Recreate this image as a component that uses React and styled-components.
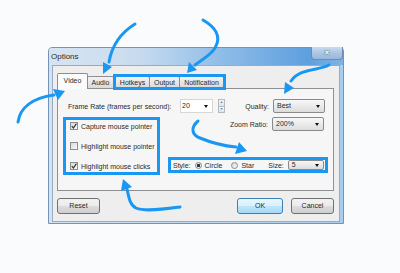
import React from "react";
import styled, { createGlobalStyle } from "styled-components";

const ink = "#1a97f2";

const GlobalStyle = createGlobalStyle`
  html, body {
    margin: 0;
    padding: 0;
    background: #fafbfd;
  }
  body {
    font-family: "Liberation Sans", Arial, sans-serif;
    color: #2a2a2a;
  }
`;

const Tick = () => (
  <svg width="6" height="6" viewBox="0 0 6 6">
    <polyline points="0.8,3 2.4,5 5.4,0.6" fill="none" stroke="#2b2b2b" strokeWidth="1.1" />
  </svg>
);

export default function App() {
  return (
    <>
      <GlobalStyle />
      <Page>
        <Window>
          <TitleBar>
            <Title>Options</Title>
            <CloseButton>✕</CloseButton>
          </TitleBar>
          <Client>
            <TabStrip>
              <Tab $active $w={31}>Video</Tab>
              <Tab $w={27}>Audio</Tab>
              <TabGroup>
                <Tab $w={35}>Hotkeys</Tab>
                <Tab $w={31}>Output</Tab>
                <Tab $w={45}>Notification</Tab>
              </TabGroup>
            </TabStrip>
            <Panel>
              <TopRow>
                <FrameLabel>Frame Rate (frames per second):</FrameLabel>
                <Combo>
                  20
                  <Caret />
                </Combo>
                <Spinner>
                  <SpinButton>▲</SpinButton>
                  <SpinButton>▼</SpinButton>
                </Spinner>
                <FieldLabel>Quality:</FieldLabel>
                <Select $w={52} $end={8}>
                  Best
                  <Caret />
                </Select>
              </TopRow>
              <Body>
                <CheckGroup>
                  <CheckRow>
                    <CheckBox>
                      <Tick />
                    </CheckBox>
                    Capture mouse pointer
                  </CheckRow>
                  <CheckRow>
                    <CheckBox />
                    Highlight mouse pointer
                  </CheckRow>
                  <CheckRow>
                    <CheckBox>
                      <Tick />
                    </CheckBox>
                    Highlight mouse clicks
                  </CheckRow>
                </CheckGroup>
                <RightColumn>
                  <ZoomRow>
                    <FieldLabel>Zoom Ratio:</FieldLabel>
                    <Select $w={52} $end={4}>
                      200%
                      <Caret />
                    </Select>
                  </ZoomRow>
                  <StyleGroup>
                    <Inline $space={2}>Style:</Inline>
                    <Radio $checked $space={4} />
                    <Inline $space={3}>Circle</Inline>
                    <Radio $space={9} />
                    <Inline $space={3}>Star</Inline>
                    <Inline $space={14}>Size:</Inline>
                    <Select $w={36} $space={4} $small>
                      5
                      <Caret />
                    </Select>
                  </StyleGroup>
                </RightColumn>
              </Body>
            </Panel>
            <ButtonRow>
              <Button $w={43}>Reset</Button>
              <Button $w={46} $primary>
                OK
              </Button>
              <Button $w={43}>Cancel</Button>
            </ButtonRow>
          </Client>
        </Window>

        <Marks viewBox="0 0 400 273">
          <g fill="none" stroke={ink} strokeWidth="3" strokeLinecap="round">
            <path d="M135 24 C122 32 112 45 109 62" />
            <path d="M203 20 C215 27 222 36 215 48 C210 56 201 60 195 65" />
            <path d="M18 122 C20 108 32 98 54 95" />
            <path d="M329 65 C318 71 300 68 291 81" />
            <path d="M198 121 C190 128 192 135 200 138 C212 143 225 146 236 147" />
            <path d="M180 207 C165 209 145 212 136 208 C130 205 129 198 127 189" />
          </g>
          <g fill={ink}>
            <polygon points="103,74 112,67 103,62" />
            <polygon points="187,73 197,70 189,62" />
            <polygon points="65,91 58,100 53,89" />
            <polygon points="284,94 294,88 285,82" />
            <polygon points="247,151 235,154 239,142" />
            <polygon points="123,179 132,187 121,191" />
          </g>
        </Marks>
      </Page>
    </>
  );
}

const Page = styled.div`
  position: relative;
  width: 400px;
  height: 273px;
  box-sizing: border-box;
  padding: 47px 0 0 48px;
  overflow: hidden;
  background: #fafbfd;
`;

const Window = styled.div`
  width: 296px;
  height: 177px;
  box-sizing: border-box;
  border: 1px solid #7393b8;
  border-radius: 4px 4px 0 0;
  background: linear-gradient(90deg, #d3e3f2 0%, #bfd6ee 50%, #a9cdef 100%);
  display: flex;
  flex-direction: column;
  padding: 0 3px 1px 3px;
`;

const TitleBar = styled.div`
  height: 17px;
  margin: 0 -3px;
  padding-left: 2px;
  display: flex;
  justify-content: space-between;
  align-items: flex-start;
  background: linear-gradient(90deg, #d6e4f2 0%, #c9dcef 30%, #8dbbe8 60%, #5f9fde 88%, #7fb3e5 100%);
  border-radius: 3px 3px 0 0;
`;

const Title = styled.span`
  font-size: 8px;
  line-height: 17px;
  color: #2a2a2a;
`;

const CloseButton = styled.div`
  width: 32px;
  height: 13px;
  margin-top: -1px;
  box-sizing: border-box;
  border: 1px solid #6f8bb0;
  border-top: none;
  border-radius: 0 0 4px 4px;
  background: linear-gradient(180deg, #c9dbee 0%, #a9c4e2 55%, #98b8dc 100%);
  color: #fff;
  font-size: 7px;
  font-weight: bold;
  line-height: 12px;
  text-align: center;
  text-shadow: 0 0 1px #3a4a60, 0 0 1px #3a4a60;
`;

const Client = styled.div`
  flex: 1;
  box-sizing: border-box;
  border: 1px solid #9aabbd;
  background: #eeeeee;
  padding: 7px 5px 7px 4px;
  display: flex;
  flex-direction: column;
`;

const TabStrip = styled.div`
  height: 15px;
  display: flex;
  align-items: flex-end;
  position: relative;
  z-index: 1;
`;

const TabGroup = styled.div`
  display: flex;
  margin-left: 1px;
  outline: 3px solid ${ink};
  outline-offset: -1px;
`;

const Tab = styled.div`
  width: ${(p) => p.$w}px;
  height: ${(p) => (p.$active ? 16 : 12)}px;
  margin-bottom: ${(p) => (p.$active ? -1 : 0)}px;
  box-sizing: border-box;
  border: 1px solid #8c8e94;
  border-bottom: none;
  border-radius: 2px 2px 0 0;
  background: ${(p) =>
    p.$active ? "#fbfbfb" : "linear-gradient(180deg, #f3f3f3 0%, #e6e6e6 50%, #d9d9d9 100%)"};
  font-size: 7px;
  line-height: ${(p) => (p.$active ? 14 : 11)}px;
  text-align: center;
  color: #2a2a2a;

  & + & {
    margin-left: -1px;
  }
`;

const Panel = styled.div`
  width: 277px;
  height: 103px;
  box-sizing: border-box;
  border: 1px solid #8e9096;
  background: #f6f6f6;
  padding: 10px 0 0 5px;
`;

const TopRow = styled.div`
  height: 14px;
  display: flex;
  align-items: center;
`;

const FrameLabel = styled.span`
  width: 112px;
  margin-left: 5px;
  font-size: 7px;
  white-space: nowrap;
`;

const Caret = styled.span`
  position: absolute;
  right: 4px;
  top: 50%;
  margin-top: -1px;
  width: 0;
  height: 0;
  border-left: 2.5px solid transparent;
  border-right: 2.5px solid transparent;
  border-top: 3px solid #111;
`;

const Combo = styled.div`
  position: relative;
  width: 33px;
  height: 14px;
  box-sizing: border-box;
  border: 1px solid #d6d6d6;
  background: #fff;
  padding-left: 1px;
  font-size: 7px;
  line-height: 12px;
`;

const Spinner = styled.div`
  width: 7px;
  height: 14px;
  margin-left: 5px;
  display: flex;
  flex-direction: column;
`;

const SpinButton = styled.div`
  flex: 1;
  box-sizing: border-box;
  border: 1px solid #b5b9c0;
  background: linear-gradient(180deg, #f7f7f7, #e3e3e3);
  color: #4d7fb8;
  font-size: 3.5px;
  line-height: 5px;
  text-align: center;
  overflow: hidden;

  & + & {
    margin-top: -1px;
  }
`;

const FieldLabel = styled.span`
  flex: 1;
  text-align: right;
  padding-right: 4px;
  font-size: 7px;
  white-space: nowrap;
`;

const Select = styled.div`
  position: relative;
  width: ${(p) => p.$w}px;
  height: ${(p) => (p.$small ? 10 : 14)}px;
  margin-left: ${(p) => p.$space || 0}px;
  margin-right: ${(p) => p.$end || 0}px;
  box-sizing: border-box;
  border: 1px solid #8a8a8a;
  border-radius: 2px;
  background: linear-gradient(180deg, #f7f7f7 0%, #ebebeb 50%, #dcdcdc 100%);
  padding-left: 3px;
  font-size: 7px;
  line-height: ${(p) => (p.$small ? 8 : 12)}px;
`;

const Body = styled.div`
  display: flex;
  margin-top: 4px;
`;

const CheckGroup = styled.div`
  width: 97px;
  height: 58px;
  box-sizing: border-box;
  border: 3px solid ${ink};
  padding-left: 4px;
  display: flex;
  flex-direction: column;
  gap: 8px;
`;

const CheckRow = styled.div`
  height: 12px;
  display: flex;
  align-items: center;
  gap: 3px;
  font-size: 7px;
  white-space: nowrap;
`;

const CheckBox = styled.span`
  width: 8px;
  height: 8px;
  box-sizing: border-box;
  border: 1px solid #8e8f8f;
  background: linear-gradient(135deg, #d8d8d8, #fafafa);
  display: flex;
  align-items: center;
  justify-content: center;
`;

const RightColumn = styled.div`
  width: 160px;
  margin-left: 8px;
  display: flex;
  flex-direction: column;
`;

const ZoomRow = styled.div`
  height: 14px;
  display: flex;
  align-items: center;
`;

const StyleGroup = styled.div`
  height: 16px;
  margin-top: 26px;
  box-sizing: border-box;
  border: 3px solid ${ink};
  display: flex;
  align-items: center;
`;

const Inline = styled.span`
  margin-left: ${(p) => p.$space || 0}px;
  font-size: 7px;
  white-space: nowrap;
`;

const Radio = styled.span`
  width: 7px;
  height: 7px;
  margin-left: ${(p) => p.$space || 0}px;
  box-sizing: border-box;
  border: 1px solid #8a8a8a;
  border-radius: 50%;
  background: ${(p) =>
    p.$checked
      ? "radial-gradient(circle, #2d3a48 0 1.4px, #e8e8e8 1.8px)"
      : "linear-gradient(135deg, #d6d6d6, #fafafa)"};
`;

const ButtonRow = styled.div`
  display: flex;
  gap: 8px;
  margin-top: 7px;

  & > :nth-child(2) {
    margin-left: auto;
  }
`;

const Button = styled.div`
  width: ${(p) => p.$w}px;
  height: 16px;
  box-sizing: border-box;
  border: 1px solid ${(p) => (p.$primary ? "#3c7fb1" : "#707070")};
  border-radius: 3px;
  background: ${(p) =>
    p.$primary
      ? "linear-gradient(180deg, #eaf6fd 0%, #d9f0fc 50%, #bee6fd 51%, #a7d9f5 100%)"
      : "linear-gradient(180deg, #f2f2f2 0%, #ebebeb 50%, #dddddd 51%, #cfcfcf 100%)"};
  font-size: 7px;
  line-height: 14px;
  text-align: center;
  color: #2a2a2a;
`;

const Marks = styled.svg`
  position: absolute;
  left: 0;
  top: 0;
  width: 400px;
  height: 273px;
  pointer-events: none;
`;
